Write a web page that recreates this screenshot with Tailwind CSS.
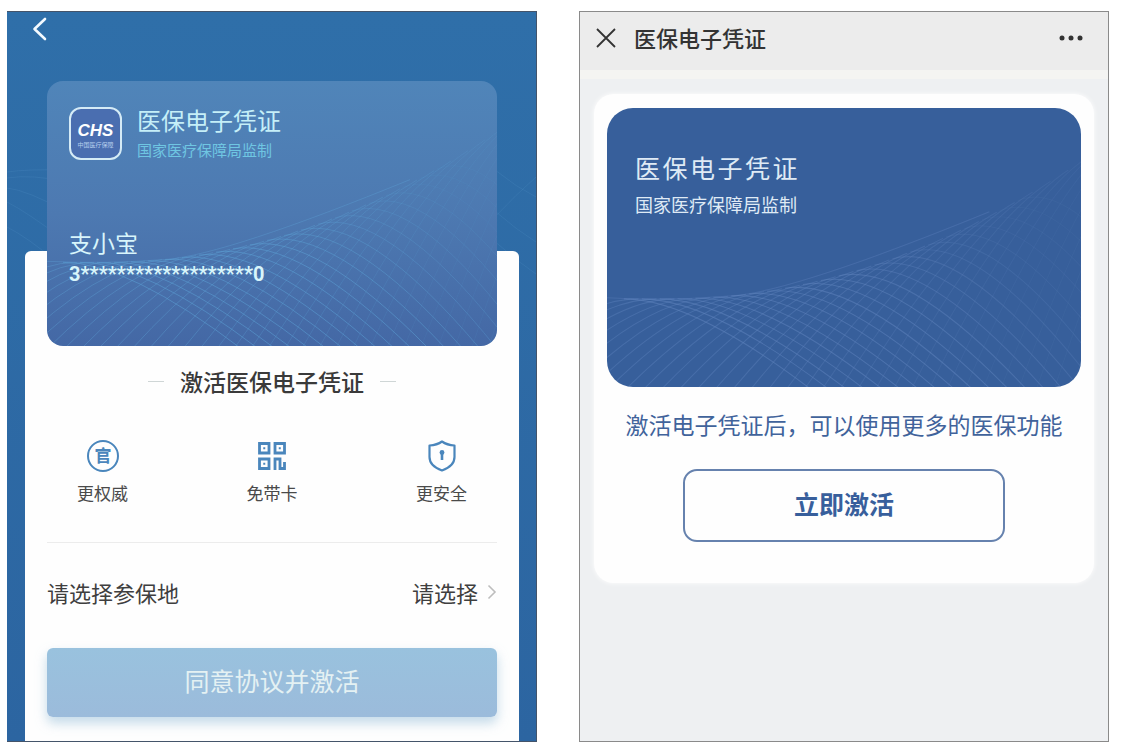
<!DOCTYPE html>
<html lang="zh-CN">
<head>
  <meta charset="UTF-8" />
  <meta name="viewport" content="width=device-width, initial-scale=1.0" />
  <title>医保电子凭证</title>
  <script src="https://cdn.jsdelivr.net/npm/@tailwindcss/browser@4"></script>
</head>
<body class="bg-white font-['Noto_Sans_CJK_SC',sans-serif]">
  <div class="grid min-h-screen grid-cols-2 gap-[42px] py-[11px] pr-4 pl-[7px]">

    <!-- Activation screen -->
    <section class="relative flex flex-col overflow-hidden border-t border-r border-b border-[#44546a] bg-linear-to-b from-[#2f6fa9] to-[#2c65a1]">
      <svg class="absolute inset-x-0 top-0 h-[300px] w-full" viewBox="0 0 530 300" preserveAspectRatio="none" fill="none" stroke="#6fb0dc" stroke-opacity=".13" aria-hidden="true">
        <path d="M0 160Q20 157 60 158M0 166Q25 162 60 170M0 176Q20 178 60 200M0 190Q20 200 60 230M0 215Q20 225 50 250" />
        <path d="M450 120Q490 165 530 185M450 160Q490 205 530 230M450 190Q490 235 530 262M450 250Q490 200 530 165" />
      </svg>
      <header class="relative h-9 pt-[5px] pl-[25px]">
        <button type="button" aria-label="返回" class="block">
          <svg class="h-6 w-[15px]" viewBox="0 0 15 24" fill="none" stroke="#f4faff" stroke-width="2.6" stroke-linecap="round" stroke-linejoin="round"><path d="M13 2 2.500 12 13 22" /></svg>
        </button>
      </header>

      <main class="relative mr-[17px] ml-[18px] mt-[203px] flex-1 rounded-t-md bg-[#fefefe] px-[22px] pb-6">
        <div class="relative -mt-[170px] h-[265px] overflow-hidden rounded-2xl bg-linear-to-b from-[#5085b9] via-[#4d79b1] to-[#4468a5] px-[22px] pt-[26px]">
          <svg class="mesh absolute inset-0 h-full w-full" viewBox="0 0 450 266" preserveAspectRatio="none" fill="none" stroke="#5fa5d8" aria-hidden="true"></svg>
          <div class="relative flex gap-[15px]">
            <div class="flex size-[53px] flex-col items-center rounded-xl border-2 border-[#d5ebf6] bg-[#4a6eb0] pt-[13px] text-white">
              <span class="font-['Liberation_Sans',sans-serif] text-[17px] leading-[18px] font-bold italic">CHS</span>
              <span class="text-[6px] leading-[10px] whitespace-nowrap text-[#b4cdec]">中国医疗保障</span>
            </div>
            <div>
              <h1 class="text-[24px] leading-[26px] text-[#c5eff8]">医保电子凭证</h1>
              <p class="mt-[6px] text-[15px] leading-[22px] text-[#6fc6e2]">国家医疗保障局监制</p>
            </div>
          </div>
          <p class="relative mt-[65px] text-[23px] leading-8 text-[#d8f5fb]">支小宝</p>
          <p class="relative font-['Roboto',sans-serif] text-[20px] leading-8 font-bold text-[#d8f5fb]">3*******************0</p>
        </div>

        <h2 class="mt-[18px] flex items-center justify-center gap-4 text-[23px] leading-[34px] font-medium text-[#3a3a3a]">
          <span class="h-px w-4 bg-[#cfd6d6]"></span>激活医保电子凭证<span class="h-px w-4 bg-[#cfd6d6]"></span>
        </h2>

        <ul class="mt-[42px] flex justify-between px-[30px] text-[17px] leading-6 text-[#4a4a4a]">
          <li class="flex flex-col items-center gap-[9px]">
            <svg class="size-8" viewBox="0 0 32 32" aria-hidden="true">
              <circle cx="16" cy="16" r="15" fill="none" stroke="#4a86bc" stroke-width="2" />
              <text x="16" y="22" text-anchor="middle" font-size="17" font-weight="700" fill="#4a86bc">官</text>
            </svg>
            更权威
          </li>
          <li class="flex flex-col items-center gap-[9px]">
            <svg class="size-8" viewBox="0 0 32 32" fill="none" stroke="#4a86bc" stroke-width="2.800" aria-hidden="true">
              <path d="M3.500 3.500h9.500v9.500h-9.500zM19 3.500h9.500v9.500H19zM3.500 19h9.500v9.500h-9.500z" />
              <path d="M7.250 8.250h2M22.750 8.250h2M7.250 23.750h2" stroke-width="2" />
              <path d="M19 30V19h5v9.500h4.500V22" stroke-width="2.800" />
            </svg>
            免带卡
          </li>
          <li class="flex flex-col items-center gap-[9px]">
            <svg class="size-8" viewBox="0 0 32 32" fill="none" stroke="#4a86bc" stroke-width="2.200" stroke-linejoin="round" aria-hidden="true">
              <path d="M16 1.500C12.500 4 8 5.200 3.500 5.500V17c0 6.500 5.500 11 12.500 13.500C23 28 28.500 23.500 28.500 17V5.500C24 5.200 19.500 4 16 1.500Z" />
              <path d="M16 11v9" stroke-width="2.600" /><circle cx="16" cy="12.500" r="2.400" fill="#4a86bc" stroke="none" />
            </svg>
            更安全
          </li>
        </ul>

        <hr class="mt-[37px] border-[#ececec]" />

        <div class="mt-[33px] flex items-center text-[22px] leading-8 text-[#3f3f3f]">
          <label for="region" class="flex-1">请选择参保地</label>
          <select id="region" class="appearance-none bg-transparent">
            <option>请选择</option>
          </select>
          <svg class="ml-2 h-4 w-[10px]" viewBox="0 0 10 16" fill="none" stroke="#bdbdbd" stroke-width="1.600" aria-hidden="true"><path d="M1.500 1.500 8 8l-6.500 6.500" /></svg>
        </div>

        <button type="button" class="mt-10 h-[69px] w-full rounded-md bg-linear-to-b from-[#99c2de] to-[#9bbbdb] pb-[3px] text-[25px] text-[#e4f1f3] shadow-[0_6px_12px_#a9cbe0b3]">同意协议并激活</button>
      </main>
    </section>

    <!-- Landing screen -->
    <section class="flex flex-col border border-[#8a8a8a] bg-[#eef0f2]">
      <header class="flex h-[58px] items-center bg-[#ececec] pr-[25px] pb-[6px] pl-4 text-[#333]">
        <button type="button" aria-label="关闭">
          <svg class="size-5" viewBox="0 0 20 20" fill="none" stroke="currentColor" stroke-width="1.800"><path d="m1 1 18 18M19 1 1 19" /></svg>
        </button>
        <h1 class="ml-[18px] flex-1 pb-[3px] text-[22px] leading-8 font-medium">医保电子凭证</h1>
        <button type="button" aria-label="更多">
          <svg class="h-[6px] w-6" viewBox="0 0 24 6" fill="currentColor"><circle cx="3" cy="3" r="2.500" /><circle cx="12" cy="3" r="2.500" /><circle cx="21" cy="3" r="2.500" /></svg>
        </button>
      </header>
      <div class="h-[9px] bg-[#f4f4f2]"></div>

      <main class="mx-[14px] mt-[15px] rounded-[20px] bg-[#fefefe] px-[13px] pt-[14px] pb-[41px] text-[#41639b] shadow-[0_0_5px_#fefefe]">
        <div class="relative h-[279px] overflow-hidden rounded-[26px] bg-[#375f9b] px-7 pt-[41px] text-[#dfeaf5]">
          <svg class="mesh absolute inset-0 h-full w-full" viewBox="0 0 450 266" preserveAspectRatio="none" fill="none" stroke="#6285bf" aria-hidden="true"></svg>
          <h2 class="relative text-[25px] leading-9 tracking-widest">医保电子凭证</h2>
          <p class="relative mt-[6px] text-[18px] leading-[26px]">国家医疗保障局监制</p>
        </div>
        <p class="mt-5 text-center text-[23px] leading-[34px]">激活电子凭证后，可以使用更多的医保功能</p>
        <button type="button" class="mx-auto mt-7 block h-[73px] w-[322px] rounded-[14px] border-2 border-[#6682ae] pb-1 text-[25px] font-bold text-[#385f9c]">立即激活</button>
      </main>
    </section>
  </div>

  <script>
    // two families of curves, both tangent to one rising wave
    const wave = x => x < 60 ? 182 : 182 - 0.00086 * (x - 60) ** 2;
    const slope = x => x < 60 ? 0 : -0.00172 * (x - 60);

    function addPath(svg, d, opacity) {
      const path = document.createElementNS("http://www.w3.org/2000/svg", "path");
      path.setAttribute("d", d);
      path.setAttribute("stroke-opacity", opacity);
      svg.appendChild(path);
    }

    document.querySelectorAll(".mesh").forEach(svg => {
      addPath(svg, "M0 181Q60 184 120 179T363 99", 0.35);
      for (let x = 16; x <= 400; x += 17) {
        const y = wave(x), k = slope(x);
        const fade = x > 200 ? Math.max(0.1, 0.5 - (x - 200) / 400) : 0.5;
        addPath(svg, `M${x} ${y}Q${x + 65} ${y + k * 50} ${x + 180} 270`, fade);
      }
      for (let x = 30; x <= 640; x += 17) {
        const y = wave(x), k = slope(x);
        const fade = x > 260 ? Math.max(0.1, 0.38 - (x - 260) / 900) : 0.38;
        addPath(svg, `M${x - 150} 270Q${x - 65} ${y - k * 65} ${x} ${y}`, fade);
      }
    });
  </script>
</body>
</html>
